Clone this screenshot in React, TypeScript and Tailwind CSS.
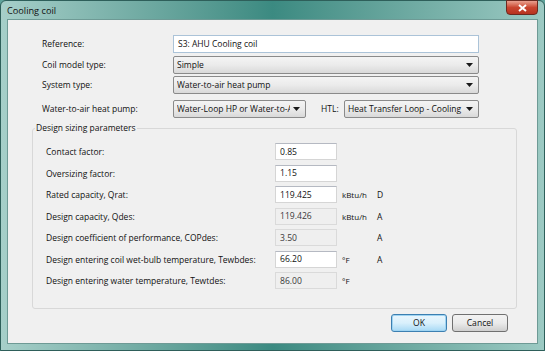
import React from "react";

const font = { fontFamily: '"Open Sans", "Noto Sans", sans-serif' };

function Arrow() {
  return (
    <svg width="7" height="4" viewBox="0 0 7 4" className="shrink-0">
      <path d="M0 0 L7 0 L3.5 4 Z" fill="#1a1a1a" />
    </svg>
  );
}

function Select({ text, w }: { text: string; w: string }) {
  return (
    <div
      className={`${w} h-[18px] flex items-center pl-[3px] pr-[5px] rounded-[2px] border border-[#8a8a8a] bg-gradient-to-b from-[#f4f4f4] via-[#ebebeb] to-[#d9d9d9] overflow-hidden`}
    >
      <div className="flex-1 min-w-0 whitespace-nowrap overflow-hidden text-[8.5px] text-[#111] leading-[14px] mr-[3px]">{text}</div>
      <Arrow />
    </div>
  );
}

function Field({ value, disabled }: { value: string; disabled?: boolean }) {
  return (
    <div
      className={`w-[62px] h-[17px] shrink-0 flex items-center pl-[4px] text-[8.6px] leading-[12px] border ${
        disabled
          ? "bg-[#efefef] border-[#dadada] text-[#3a3a3a]"
          : "bg-white border-[#d5d5d5] border-t-[#b5b9c2] text-[#111]"
      }`}
    >
      {value}
    </div>
  );
}

function Row({ label, value, disabled, unit, flag }: { label: string; value: string; disabled?: boolean; unit?: string; flag?: string }) {
  return (
    <div className="h-[21.5px] flex items-start">
      <div className="w-[242px] shrink-0 pl-[13px] pt-[3px] text-[8.5px] leading-[12px] text-[#111] whitespace-nowrap">{label}</div>
      <Field value={value} disabled={disabled} />
      <div className="w-[40px] shrink-0 pl-[5px] pt-[3px] text-[8px] leading-[12px] text-[#111]">{unit}</div>
      <div className="pt-[3px] text-[8.5px] leading-[12px] text-[#111]">{flag}</div>
    </div>
  );
}

export default function App() {
  return (
    <div style={font} className="w-[545px] h-[351px] flex flex-col bg-[#5fa39b] overflow-hidden">
      <div className="w-[545px] h-[351px] flex flex-col rounded-t-[6px] border border-[#2e5f5a] bg-gradient-to-r from-[#a6cfc9] via-[#3b8a81] to-[#9ccac3] px-[6px] pb-[6px]">
        <div className="h-[21px] flex items-start justify-between">
          <div className="pt-[4px] pl-[0px] text-[9.2px] leading-[12px] text-[#111]">Cooling coil</div>
          <div className="mt-[-1px] mr-[0px] w-[32px] h-[15px] rounded-b-[4px] border border-[#6b2a20] bg-gradient-to-b from-[#e9a08f] via-[#c9452f] to-[#b63320] flex items-center justify-center">
            <svg width="9" height="8" viewBox="0 0 9 8">
              <path d="M1 1 L8 7 M8 1 L1 7" stroke="#fff" strokeWidth="2" />
            </svg>
          </div>
        </div>
        <div className="flex-1 flex flex-col border border-[#6e9a95] bg-[#f0f0f0] pt-[15px] pl-[34px] pr-[29px] pb-[11px]">
          <div className="flex items-center h-[18px]">
            <div className="w-[131px] text-[8.5px] text-[#111]">Reference:</div>
            <div className="w-[306px] h-[18px] flex items-center pl-[4px] bg-white border border-[#abc3d8] text-[8.5px] text-[#111]">S3: AHU Cooling coil</div>
          </div>
          <div className="flex items-center h-[18px] mt-[3px]">
            <div className="w-[131px] text-[8.5px] text-[#111]">Coil model type:</div>
            <Select text="Simple" w="w-[306px]" />
          </div>
          <div className="flex items-center h-[18px] mt-[2px]">
            <div className="w-[131px] text-[8.5px] text-[#111]">System type:</div>
            <Select text="Water-to-air heat pump" w="w-[306px]" />
          </div>
          <div className="flex items-center h-[18px] mt-[6px]">
            <div className="w-[131px] text-[8.5px] text-[#111]">Water-to-air heat pump:</div>
            <Select text="Water-Loop HP or Water-to-Air" w="w-[133px]" />
            <div className="w-[38px] pl-[15px] text-[8.5px] text-[#111]">HTL:</div>
            <Select text="Heat Transfer Loop - Cooling tower" w="w-[135px]" />
          </div>
          <div className="relative mt-[10px] ml-[-10px] w-[485px] h-[181px] border border-[#d8d8d8] rounded-[3px] pt-[14px] flex flex-col">
            <div className="absolute left-[2px] top-[-7px] px-[1px] bg-[#f0f0f0] text-[8.5px] leading-[12px] text-[#111]">Design sizing parameters</div>
            <Row label="Contact factor:" value="0.85" />
            <Row label="Oversizing factor:" value="1.15" />
            <Row label="Rated capacity, Qrat:" value="119.425" unit="kBtu/h" flag="D" />
            <Row label="Design capacity, Qdes:" value="119.426" disabled unit="kBtu/h" flag="A" />
            <Row label="Design coefficient of performance, COPdes:" value="3.50" disabled flag="A" />
            <Row label="Design entering coil wet-bulb temperature, Tewbdes:" value="66.20" unit="°F" flag="A" />
            <Row label="Design entering water temperature, Tewtdes:" value="86.00" disabled unit="°F" />
          </div>
          <div className="flex justify-end gap-[5px] mt-[5px]">
            <div className="w-[56px] h-[18px] rounded-[3px] border border-[#3c7fb1] bg-gradient-to-b from-[#eaf6fd] via-[#d9f0fc] to-[#a7d9f5] flex items-center justify-center text-[8.6px] text-[#111] shadow-[inset_0_0_0_1px_#9fd4f2]">OK</div>
            <div className="w-[56px] h-[18px] rounded-[3px] border border-[#707070] bg-gradient-to-b from-[#f2f2f2] via-[#ebebeb] to-[#cfcfcf] flex items-center justify-center text-[8.6px] text-[#111]">Cancel</div>
          </div>
        </div>
      </div>
    </div>
  );
}
